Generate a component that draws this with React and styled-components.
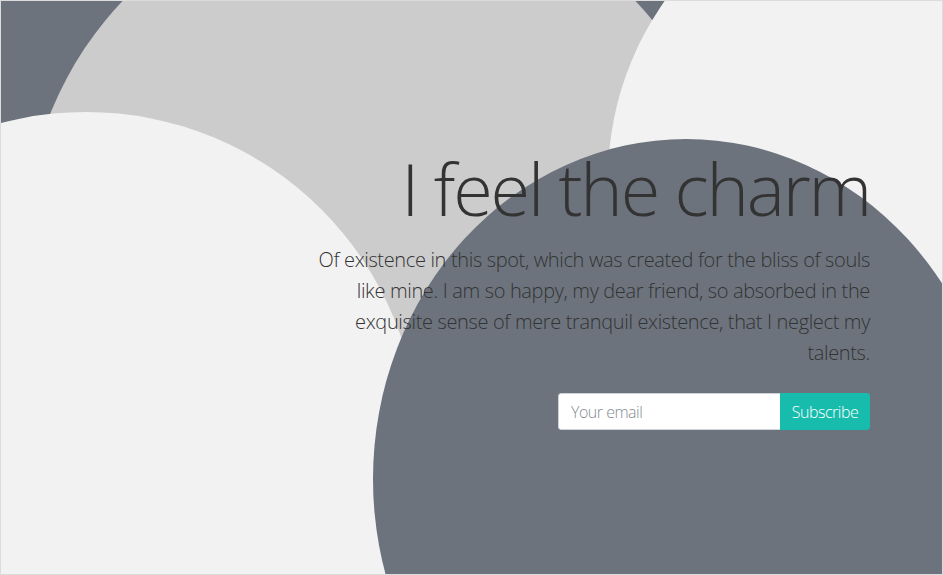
import React from 'react'
import styled, { createGlobalStyle } from 'styled-components'

const GlobalStyle = createGlobalStyle`
  html, body {
    margin: 0;
    padding: 0;
    background: #ffffff;
  }
  body {
    font-family: "Open Sans", "Liberation Sans", sans-serif;
  }
`

const Stage = styled.div`
  position: relative;
  width: 943px;
  height: 575px;
  box-sizing: border-box;
  border: 1px solid #dcdcdc;
  background: #6c737d;
  overflow: hidden;
`

// decorative blobs, placed by centre and radii
const Blob = styled.div`
  position: absolute;
  left: ${p => p.$x - p.$rx}px;
  top: ${p => p.$y - p.$ry}px;
  width: ${p => p.$rx * 2}px;
  height: ${p => p.$ry * 2}px;
  border-radius: 50%;
  background: ${p => p.$color};
`

const Hero = styled.div`
  position: relative;
  z-index: 1;
  display: flex;
  flex-direction: column;
  align-items: flex-end;
  padding: 148px 72px 0 0;
  color: #333333;
`

const Title = styled.h1`
  margin: 0;
  font-size: 72px;
  font-weight: 300;
  line-height: 1.1;
  letter-spacing: -2.2px;
  text-align: right;
`

const Lead = styled.p`
  margin: 16px 0 0;
  width: 556px;
  font-size: 20px;
  font-weight: 300;
  line-height: 31px;
  letter-spacing: -0.35px;
  text-align: right;
`

const Form = styled.form`
  display: flex;
  margin-top: 25px;
  border-radius: 3px;
  overflow: hidden;
`

const EmailInput = styled.input`
  width: 222px;
  height: 37px;
  box-sizing: border-box;
  border: 1px solid #cfd3d8;
  border-right: none;
  border-radius: 3px 0 0 3px;
  padding: 0 12px;
  font-family: inherit;
  font-size: 16px;
  font-weight: 300;
  letter-spacing: -0.5px;
  color: #555;
  background: #ffffff;
  outline: none;

  &::placeholder {
    color: #858b92;
  }
`

const SubscribeButton = styled.button`
  height: 37px;
  width: 90px;
  border: none;
  border-radius: 0 3px 3px 0;
  background: #17bcac;
  color: #ffffff;
  font-family: inherit;
  font-size: 16px;
  font-weight: 300;
  letter-spacing: -0.5px;
  padding: 0;
  cursor: pointer;
`

export default function App() {
  return (
    <>
      <GlobalStyle />
      <Stage>
        <Blob $x={378} $y={244} $rx={354} $ry={354} $color="#cccccc" />
        <Blob $x={915} $y={178} $rx={308} $ry={308} $color="#f2f2f2" />
        <Blob $x={85} $y={444} $rx={333} $ry={333} $color="#f2f2f2" />
        <Blob $x={685} $y={478} $rx={313} $ry={340} $color="#6c737d" />
        <Hero>
          <Title>I feel the charm</Title>
          <Lead>
            Of existence in this spot, which was created for the bliss of souls
            like mine. I am so happy, my dear friend, so absorbed in the
            exquisite sense of mere tranquil existence, that I neglect my
            talents.
          </Lead>
          <Form onSubmit={e => e.preventDefault()}>
            <EmailInput type="email" placeholder="Your email" />
            <SubscribeButton type="submit">Subscribe</SubscribeButton>
          </Form>
        </Hero>
      </Stage>
    </>
  )
}
